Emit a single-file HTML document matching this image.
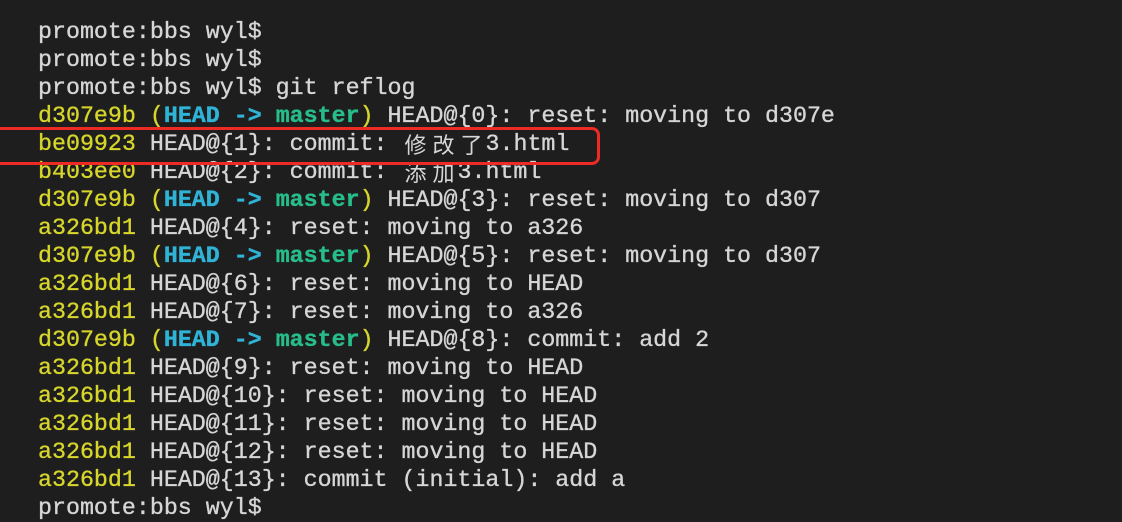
<!DOCTYPE html>
<html><head><meta charset="utf-8"><style>
html,body{margin:0;padding:0;background:#1e1e1e;width:1122px;height:500px;overflow:hidden}
.t{position:absolute;left:38px;top:18px;font-family:"Liberation Mono",monospace;font-size:23.3px;line-height:28px;color:#d6d6d6;white-space:pre;-webkit-text-stroke:0.35px currentColor}
.y{color:#d6d52b}.c{color:#2fb4d8;font-weight:bold}.g{color:#27bd8b;font-weight:bold}
.z{display:inline-block;width:28px;text-align:center;font-family:"Noto Sans CJK SC",sans-serif;font-size:22px;line-height:28px;vertical-align:top;-webkit-text-stroke:0}
.box{position:absolute;left:-20px;top:127px;width:614px;height:32px;border:3px solid #ee2a24;border-radius:8px}
</style></head><body>
<div class="t">promote:bbs wyl$
promote:bbs wyl$
promote:bbs wyl$ git reflog
<span class="y">d307e9b</span> <span class="y">(</span><span class="c">HEAD -&gt; </span><span class="g">master</span><span class="y">)</span> HEAD@{0}: reset: moving to d307e
<span class="y">be09923</span> HEAD@{1}: commit: <span class="z">修</span><span class="z">改</span><span class="z">了</span>3.html
<span class="y">b403ee0</span> HEAD@{2}: commit: <span class="z">添</span><span class="z">加</span>3.html
<span class="y">d307e9b</span> <span class="y">(</span><span class="c">HEAD -&gt; </span><span class="g">master</span><span class="y">)</span> HEAD@{3}: reset: moving to d307
<span class="y">a326bd1</span> HEAD@{4}: reset: moving to a326
<span class="y">d307e9b</span> <span class="y">(</span><span class="c">HEAD -&gt; </span><span class="g">master</span><span class="y">)</span> HEAD@{5}: reset: moving to d307
<span class="y">a326bd1</span> HEAD@{6}: reset: moving to HEAD
<span class="y">a326bd1</span> HEAD@{7}: reset: moving to a326
<span class="y">d307e9b</span> <span class="y">(</span><span class="c">HEAD -&gt; </span><span class="g">master</span><span class="y">)</span> HEAD@{8}: commit: add 2
<span class="y">a326bd1</span> HEAD@{9}: reset: moving to HEAD
<span class="y">a326bd1</span> HEAD@{10}: reset: moving to HEAD
<span class="y">a326bd1</span> HEAD@{11}: reset: moving to HEAD
<span class="y">a326bd1</span> HEAD@{12}: reset: moving to HEAD
<span class="y">a326bd1</span> HEAD@{13}: commit (initial): add a
promote:bbs wyl$</div>
<div class="box"></div>
</body></html>
